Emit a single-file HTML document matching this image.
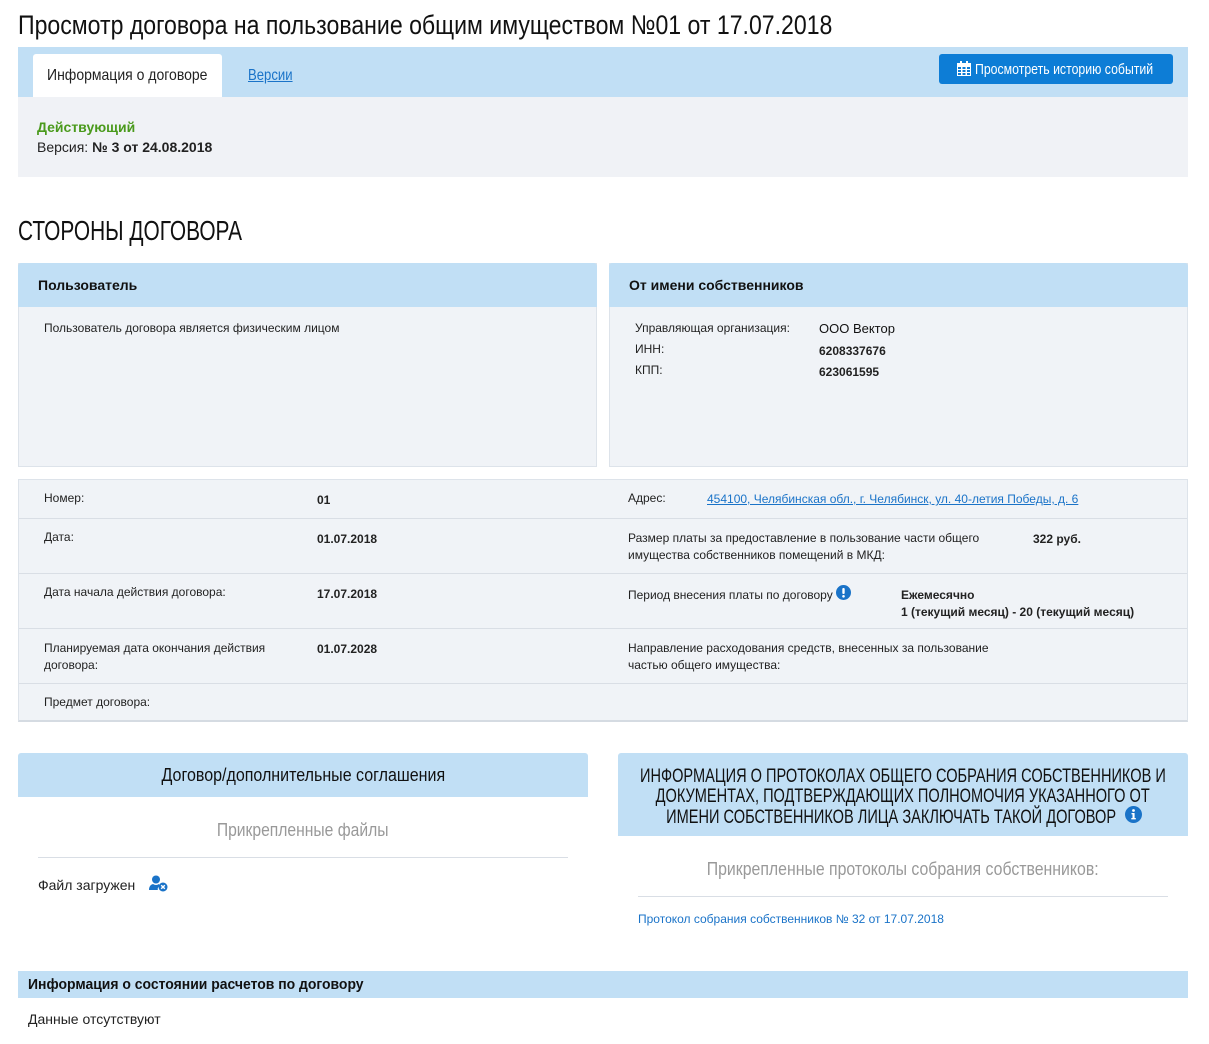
<!DOCTYPE html>
<html><head><meta charset="utf-8">
<style>
*{margin:0;padding:0;box-sizing:border-box}
body{width:1209px;height:1044px;background:#fff;font-family:"Liberation Sans",Arial,sans-serif;color:#222;position:relative;overflow:hidden;font-size:12px}
.a{position:absolute;white-space:nowrap}
.c{display:inline-block;transform-origin:left center}
.f{display:flex;justify-content:center}
.f span{display:inline-block;flex:none;transform-origin:center center;white-space:nowrap}
.b{font-weight:bold;font-size:12px}
.blue{background:#c1dff5}
.gray{background:#f0f3f7}
.line{position:absolute;left:19px;width:1168px;height:1px;background:#d9dee5}
</style></head><body>

<div class="a" style="left:18px;top:10px;font-size:27px;color:#111"><span class="c" style="transform:scaleX(.855)">Просмотр договора на пользование общим имуществом №01 от 17.07.2018</span></div>

<div class="a blue" style="left:18px;top:47px;width:1170px;height:50px"></div>
<div class="a" style="left:33px;top:54px;width:189px;height:43px;background:#fff;border-radius:3px 3px 0 0"></div>
<div class="a" style="left:47px;top:67px;font-size:16px;color:#222"><span class="c" style="transform:scaleX(.875)">Информация о договоре</span></div>
<div class="a" style="left:248px;top:67px;font-size:16px;color:#1a73c8"><span class="c" style="transform:scaleX(.82);text-decoration:underline">Версии</span></div>
<div class="a" style="left:939px;top:54px;width:234px;height:30px;background:#0d7dd6;border-radius:3px"></div>
<svg class="a" style="left:957px;top:61px" width="14" height="15" viewBox="0 0 14 15"><rect x="0" y="2" width="14" height="13" fill="#fff"/><rect x="3" y="0" width="2" height="4" fill="#fff"/><rect x="9" y="0" width="2" height="4" fill="#fff"/><g fill="#0d7dd6"><rect x="1" y="6" width="3" height="2"/><rect x="5.5" y="6" width="3" height="2"/><rect x="10" y="6" width="3" height="2"/><rect x="1" y="9" width="3" height="2"/><rect x="5.5" y="9" width="3" height="2"/><rect x="10" y="9" width="3" height="2"/><rect x="1" y="12" width="3" height="2"/><rect x="5.5" y="12" width="3" height="2"/><rect x="10" y="12" width="3" height="2"/></g></svg>
<div class="a" style="left:975px;top:61px;font-size:15px;color:#fff"><span class="c" style="transform:scaleX(.82)">Просмотреть историю событий</span></div>

<div class="a" style="left:18px;top:97px;width:1170px;height:80px;background:#f0f2f6"></div>
<div class="a" style="left:37px;top:119px;font-size:14px;font-weight:bold;color:#4a9a1c">Действующий</div>
<div class="a" style="left:37px;top:139px;font-size:14px;color:#222">Версия: <b>№ 3 от 24.08.2018</b></div>

<div class="a" style="left:18px;top:215px;font-size:28px;color:#111"><span class="c" style="transform:scaleX(.745)">СТОРОНЫ ДОГОВОРА</span></div>

<div class="a gray" style="left:18px;top:263px;width:579px;height:204px;border:1px solid #dde3ea"></div>
<div class="a blue" style="left:18px;top:263px;width:579px;height:44px;border-radius:3px 3px 0 0"></div>
<div class="a" style="left:38px;top:277px;font-size:14px;font-weight:bold;color:#111">Пользователь</div>
<div class="a" style="left:44px;top:321px;color:#222">Пользователь договора является физическим лицом</div>

<div class="a gray" style="left:609px;top:263px;width:579px;height:204px;border:1px solid #dde3ea"></div>
<div class="a blue" style="left:609px;top:263px;width:579px;height:44px;border-radius:3px 3px 0 0"></div>
<div class="a" style="left:629px;top:277px;font-size:14px;font-weight:bold;color:#111">От имени собственников</div>
<div class="a" style="left:635px;top:321px">Управляющая организация:</div>
<div class="a" style="left:819px;top:321px;font-size:13px;color:#111">ООО Вектор</div>
<div class="a" style="left:635px;top:342px">ИНН:</div>
<div class="a b" style="left:819px;top:344px">6208337676</div>
<div class="a" style="left:635px;top:363px">КПП:</div>
<div class="a b" style="left:819px;top:365px">623061595</div>

<div class="a gray" style="left:18px;top:479px;width:1170px;height:243px;border:1px solid #dde3ea;border-bottom:2px solid #d5dbe2"></div>
<div class="line" style="top:518px"></div>
<div class="line" style="top:573px"></div>
<div class="line" style="top:628px"></div>
<div class="line" style="top:683px"></div>

<div class="a" style="left:44px;top:491px">Номер:</div>
<div class="a b" style="left:317px;top:493px">01</div>
<div class="a" style="left:628px;top:491px">Адрес:</div>
<div class="a" style="left:707px;top:492px;color:#1a73c8;text-decoration:underline">454100, Челябинская обл., г. Челябинск, ул. 40-летия Победы, д. 6</div>

<div class="a" style="left:44px;top:530px">Дата:</div>
<div class="a b" style="left:317px;top:532px">01.07.2018</div>
<div class="a" style="left:628px;top:530px;line-height:17px">Размер платы за предоставление в пользование части общего<br>имущества собственников помещений в МКД:</div>
<div class="a b" style="left:1033px;top:532px">322 руб.</div>

<div class="a" style="left:44px;top:585px">Дата начала действия договора:</div>
<div class="a b" style="left:317px;top:587px">17.07.2018</div>
<div class="a" style="left:628px;top:588px">Период внесения платы по договору</div>
<svg class="a" style="left:836px;top:585px" width="15" height="15" viewBox="0 0 15 15"><circle cx="7.5" cy="7.5" r="7.5" fill="#1a73c8"/><rect x="6.3" y="3" width="2.4" height="6" rx="1" fill="#fff"/><circle cx="7.5" cy="11.3" r="1.3" fill="#fff"/></svg>
<div class="a b" style="left:901px;top:587px;line-height:17px">Ежемесячно<br>1 (текущий месяц) - 20 (текущий месяц)</div>

<div class="a" style="left:44px;top:640px;line-height:17px">Планируемая дата окончания действия<br>договора:</div>
<div class="a b" style="left:317px;top:642px">01.07.2028</div>
<div class="a" style="left:628px;top:640px;line-height:17px">Направление расходования средств, внесенных за пользование<br>частью общего имущества:</div>

<div class="a" style="left:44px;top:695px">Предмет договора:</div>

<div class="a blue" style="left:18px;top:753px;width:570px;height:44px;border-radius:3px 3px 0 0"></div>
<div class="a f" style="left:18px;top:765px;width:570px;font-size:18px;color:#111"><span style="transform:scaleX(.89)">Договор/дополнительные соглашения</span></div>
<div class="a f" style="left:18px;top:820px;width:570px;font-size:18px;color:#999"><span style="transform:scaleX(.87)">Прикрепленные файлы</span></div>
<div class="a" style="left:38px;top:857px;width:530px;height:1px;background:#d9dee5"></div>
<div class="a" style="left:38px;top:877px;font-size:14px;color:#222">Файл загружен</div>
<svg class="a" style="left:149px;top:875px" width="20" height="18" viewBox="0 0 20 18"><circle cx="7" cy="4.5" r="4" fill="#1a73c8"/><path d="M4 9 Q7 11 10 9 L10 11 Q8 14 9 15 L0 15 Q0 10 4 9Z" fill="#1a73c8"/><circle cx="14" cy="12" r="4.5" fill="#1a73c8"/><path d="M12.2 10.2 L15.8 13.8 M15.8 10.2 L12.2 13.8" stroke="#fff" stroke-width="1.4"/></svg>

<div class="a blue" style="left:618px;top:753px;width:570px;height:83px;border-radius:3px 3px 0 0"></div>
<div class="a f" style="left:618px;top:765px;width:570px;font-size:19.5px;color:#111"><span style="transform:scaleX(.747)">ИНФОРМАЦИЯ О ПРОТОКОЛАХ ОБЩЕГО СОБРАНИЯ СОБСТВЕННИКОВ И</span></div>
<div class="a f" style="left:618px;top:785px;width:570px;font-size:19.5px;color:#111"><span style="transform:scaleX(.747)">ДОКУМЕНТАХ, ПОДТВЕРЖДАЮЩИХ ПОЛНОМОЧИЯ УКАЗАННОГО ОТ</span></div>
<div class="a f" style="left:606px;top:806px;width:570px;font-size:19.5px;color:#111"><span style="transform:scaleX(.747)">ИМЕНИ СОБСТВЕННИКОВ ЛИЦА ЗАКЛЮЧАТЬ ТАКОЙ ДОГОВОР</span></div>
<svg class="a" style="left:1125px;top:806px" width="17" height="17" viewBox="0 0 17 17"><circle cx="8.5" cy="8.5" r="8.5" fill="#1a73c8"/><circle cx="8.5" cy="4.5" r="1.4" fill="#fff"/><path d="M6.5 7 H9.6 V12 H10.8 V13.4 H6.3 V12 H7.5 V8.4 H6.5Z" fill="#fff"/></svg>
<div class="a f" style="left:618px;top:859px;width:570px;font-size:18px;color:#999"><span style="transform:scaleX(.88)">Прикрепленные протоколы собрания собственников:</span></div>
<div class="a" style="left:638px;top:896px;width:530px;height:1px;background:#d9dee5"></div>
<div class="a" style="left:638px;top:912px;color:#1a73c8">Протокол собрания собственников № 32 от 17.07.2018</div>

<div class="a blue" style="left:18px;top:971px;width:1170px;height:27px"></div>
<div class="a" style="left:28px;top:976px;font-size:15px;font-weight:bold;color:#111"><span class="c" style="transform:scaleX(.93)">Информация о состоянии расчетов по договору</span></div>
<div class="a" style="left:28px;top:1011px;font-size:14px;color:#222">Данные отсутствуют</div>

</body></html>
